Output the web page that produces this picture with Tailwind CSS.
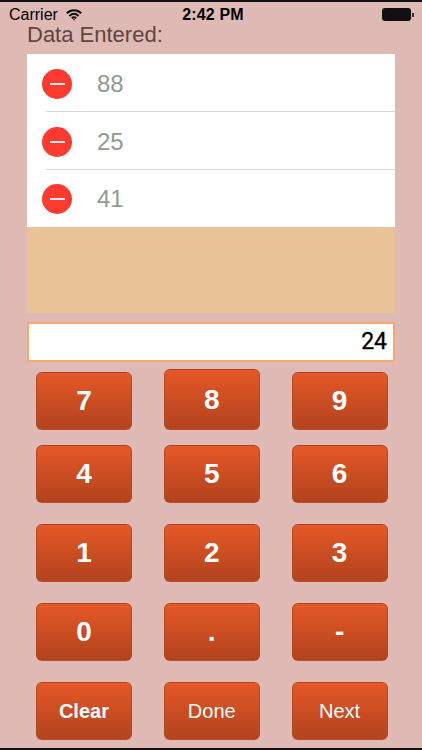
<!DOCTYPE html>
<html lang="en">
<head>
    <meta charset="UTF-8">
    <meta name="viewport" content="width=device-width, initial-scale=1.0">
    <title>Data Entry</title>
    <script src="https://cdn.jsdelivr.net/npm/@tailwindcss/browser@4"></script>
</head>
<body class="bg-[#dfbab4]">
    <div class="w-[422px] h-[750px] overflow-hidden flex flex-col bg-[#dfbab4] font-['Liberation_Sans',sans-serif]">

        <!-- Status bar -->
        <div class="h-[2px] bg-[#111]"></div>
        <div class="h-[25px] shrink-0 pl-[9px] pr-[8px] grid grid-cols-3 items-center text-black">
            <div class="flex items-center gap-[8px] text-[16px]">
                <span>Carrier</span>
                <svg class="w-[16px] h-[12px]" viewBox="0 0 16 12" fill="none" stroke="#111" stroke-width="2" stroke-linecap="butt">
                    <path d="M.8 4.2C5 .2 11 .2 15.2 4.2"/>
                    <path d="M3.4 6.9C6.2 4.3 9.8 4.3 12.6 6.9"/>
                    <path d="M5.8 9.2C7.2 8 8.8 8 10.2 9.2"/>
                    <circle cx="8" cy="10.6" r=".8" fill="#111" stroke="none"/>
                </svg>
            </div>
            <div class="pl-[3px] text-center text-[16px] font-bold tracking-[0.15px]">2:42 PM</div>
            <div class="flex justify-end items-center">
                <div class="w-[29px] h-[13px] bg-[#111] rounded-[3px]"></div>
                <div class="w-[2px] h-[4px] ml-[1px] bg-[#333]"></div>
            </div>
        </div>

        <!-- Data list -->
        <div class="px-[27px]">
            <h1 class="text-[22px] leading-[24px] -mt-[4px] text-[#5f4440]">Data Entered:</h1>
            <div class="mt-[7px] bg-white h-[173px] overflow-hidden">
                <div class="h-[57px] pt-[2px] flex items-center pl-[15px] text-[24px] text-[#8f9c90]">
                    <span class="w-[30px] h-[30px] rounded-full bg-[#fd3a30] flex items-center justify-center"><span class="w-[15px] h-[2px] bg-white/90"></span></span>
                    <span class="ml-[25px]">88</span>
                </div>
                <div class="h-px ml-[19px] bg-[#d5d5d5]"></div>
                <div class="h-[57px] pt-[2px] flex items-center pl-[15px] text-[24px] text-[#8f9c90]">
                    <span class="w-[30px] h-[30px] rounded-full bg-[#fd3a30] flex items-center justify-center"><span class="w-[15px] h-[2px] bg-white/90"></span></span>
                    <span class="ml-[25px]">25</span>
                </div>
                <div class="h-px ml-[19px] bg-[#d5d5d5]"></div>
                <div class="h-[57px] pt-[1px] flex items-center pl-[15px] text-[24px] text-[#8f9c90]">
                    <span class="w-[30px] h-[30px] rounded-full bg-[#fd3a30] flex items-center justify-center"><span class="w-[15px] h-[2px] bg-white/90"></span></span>
                    <span class="ml-[25px]">41</span>
                </div>
            </div>
            <div class="h-[86px] bg-[#e9c398]"></div>
            <div class="mt-[9px] h-[40px] bg-white border-2 border-[#f9a670] flex items-center justify-end pr-[6px] text-[23px] font-['Roboto',sans-serif] [-webkit-text-stroke:0.3px_black] text-black">24</div>
        </div>

        <!-- Keypad -->
        <div class="pl-[36px] pr-[34.5px] mt-[7px] flex flex-col text-white">
            <div class="grid grid-cols-3 gap-x-[32px] items-end">
                <button class="h-[58px] rounded-[6px] border border-[#a8452a]/70 bg-gradient-to-b from-[#e65827] to-[#b2431e] text-[28px] font-bold">7</button>
                <button class="h-[61px] rounded-[6px] border border-[#a8452a]/70 bg-gradient-to-b from-[#e65827] to-[#b2431e] text-[28px] font-bold">8</button>
                <button class="h-[58px] rounded-[6px] border border-[#a8452a]/70 bg-gradient-to-b from-[#e65827] to-[#b2431e] text-[28px] font-bold">9</button>
            </div>
            <div class="grid grid-cols-3 gap-x-[32px] mt-[15px]">
                <button class="h-[58px] rounded-[6px] border border-[#a8452a]/70 bg-gradient-to-b from-[#e65827] to-[#b2431e] text-[28px] font-bold">4</button>
                <button class="h-[58px] rounded-[6px] border border-[#a8452a]/70 bg-gradient-to-b from-[#e65827] to-[#b2431e] text-[28px] font-bold">5</button>
                <button class="h-[58px] rounded-[6px] border border-[#a8452a]/70 bg-gradient-to-b from-[#e65827] to-[#b2431e] text-[28px] font-bold">6</button>
            </div>
            <div class="grid grid-cols-3 gap-x-[32px] mt-[21px]">
                <button class="h-[58px] rounded-[6px] border border-[#a8452a]/70 bg-gradient-to-b from-[#e65827] to-[#b2431e] text-[28px] font-bold">1</button>
                <button class="h-[58px] rounded-[6px] border border-[#a8452a]/70 bg-gradient-to-b from-[#e65827] to-[#b2431e] text-[28px] font-bold">2</button>
                <button class="h-[58px] rounded-[6px] border border-[#a8452a]/70 bg-gradient-to-b from-[#e65827] to-[#b2431e] text-[28px] font-bold">3</button>
            </div>
            <div class="grid grid-cols-3 gap-x-[32px] mt-[21px]">
                <button class="h-[58px] rounded-[6px] border border-[#a8452a]/70 bg-gradient-to-b from-[#e65827] to-[#b2431e] text-[28px] font-bold">0</button>
                <button class="h-[58px] rounded-[6px] border border-[#a8452a]/70 bg-gradient-to-b from-[#e65827] to-[#b2431e] text-[28px] font-bold">.</button>
                <button class="h-[58px] rounded-[6px] border border-[#a8452a]/70 bg-gradient-to-b from-[#e65827] to-[#b2431e] text-[28px] font-bold">-</button>
            </div>
            <div class="grid grid-cols-3 gap-x-[32px] mt-[21px]">
                <button class="h-[58px] rounded-[6px] border border-[#a8452a]/70 bg-gradient-to-b from-[#e65827] to-[#b2431e] text-[20px] font-bold">Clear</button>
                <button class="h-[58px] rounded-[6px] border border-[#a8452a]/70 bg-gradient-to-b from-[#e65827] to-[#b2431e] text-[20px]">Done</button>
                <button class="h-[58px] rounded-[6px] border border-[#a8452a]/70 bg-gradient-to-b from-[#e65827] to-[#b2431e] text-[20px]">Next</button>
            </div>
        </div>

        <div class="mt-auto h-[2px] bg-[#111]"></div>
    </div>
</body>
</html>
